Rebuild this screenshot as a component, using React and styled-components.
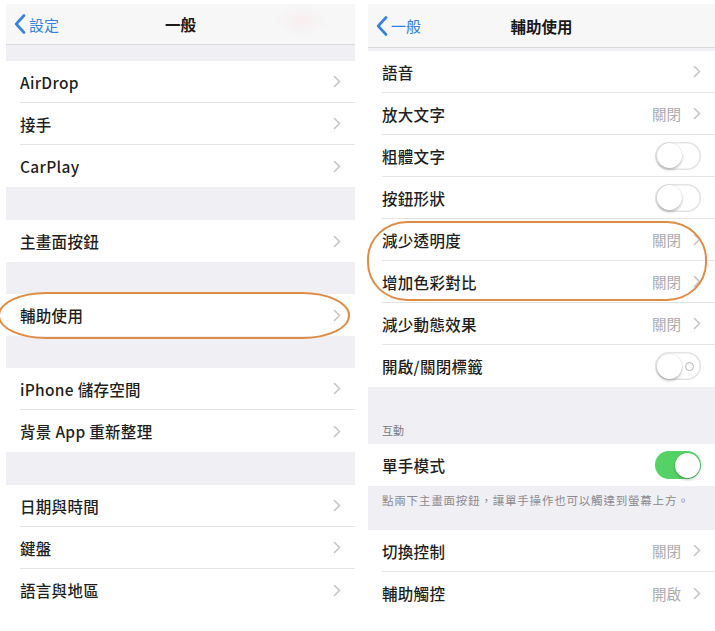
import React from 'react';
import styled, { createGlobalStyle } from 'styled-components';

const Global = createGlobalStyle`
  html, body { margin: 0; padding: 0; background: #ffffff; }
  body { font-family: "Noto Sans CJK TC", "Noto Sans", sans-serif; }
  * { box-sizing: border-box; }
`;

const Page = styled.div`
  display: flex;
  align-items: flex-start;
  gap: 13px;
  padding: 4px 0 0 6px;
  width: 715px;
  height: 631px;
  overflow: hidden;
`;

const Phone = styled.div`
  position: relative;
  width: ${p => p.$w}px;
  flex: none;
  background: #efeff4;
  display: flex;
  flex-direction: column;
`;

const Nav = styled.div`
  height: ${p => p.$h}px;
  background: #f7f7f8;
  border-bottom: 1px solid #d9d9dd;
  display: grid;
  grid-template-columns: 1fr auto 1fr;
  align-items: center;
  padding: 0 8px;
`;

const Back = styled.div`
  display: flex;
  align-items: center;
  gap: 3px;
  color: #3580e0;
  font-size: 15px;
  justify-self: start;
`;

const Title = styled.div`
  font-size: 15.5px;
  font-weight: 700;
  color: #1a1a1a;
`;

const Gap = styled.div`
  height: ${p => p.$h}px;
`;

const GroupHeader = styled.div`
  height: ${p => p.$h}px;
  display: flex;
  align-items: flex-end;
  padding: 0 14px 6px;
  font-size: 11px;
  color: #7a7a7f;
`;

const Row = styled.div`
  height: 42px;
  background: #ffffff;
  padding-left: 14px;
  display: flex;
`;

const RowInner = styled.div`
  flex: 1;
  display: flex;
  align-items: center;
  padding-right: 14px;
  border-bottom: ${p => (p.$last ? 'none' : '1px solid #e4e4e7')};
`;

const Label = styled.div`
  flex: 1;
  font-size: 15.5px;
  font-weight: 500;
  color: #1f1f21;
  letter-spacing: 0.3px;
`;

const Value = styled.div`
  font-size: 14.5px;
  color: #ababaf;
  margin-right: 12px;
`;

const Footer = styled.div`
  height: 44px;
  padding: 6px 14px 0;
  font-size: 11.5px;
  color: #8b8b90;
  letter-spacing: 0.8px;
  white-space: nowrap;
`;

const Track = styled.div`
  width: 46px;
  height: 28px;
  border-radius: 14px;
  padding: 1.5px;
  display: flex;
  align-items: center;
  justify-content: ${p => (p.$on ? 'flex-end' : 'space-between')};
  background: ${p => (p.$on ? '#55d266' : '#ffffff')};
  box-shadow: ${p => (p.$on ? 'none' : 'inset 0 0 0 1.5px #e3e3e6')};
`;

const Knob = styled.div`
  width: 25px;
  height: 25px;
  border-radius: 50%;
  background: #ffffff;
  box-shadow: 0 2px 3px rgba(0, 0, 0, 0.22), 0 0 0 0.5px rgba(0, 0, 0, 0.08);
`;

const Ring = styled.div`
  width: 9px;
  height: 9px;
  border-radius: 50%;
  border: 1.3px solid #b3b3b7;
  margin-right: 6px;
`;

const Mark = styled.div`
  position: absolute;
  left: ${p => p.$l}px;
  top: ${p => p.$t}px;
  width: ${p => p.$w}px;
  height: ${p => p.$h}px;
  border: 2px solid #df8d46;
  border-radius: ${p => p.$r};
  pointer-events: none;
`;

const Smudge = styled.div`
  position: absolute;
  left: 268px;
  top: 1px;
  width: 56px;
  height: 32px;
  background: radial-gradient(ellipse at center, rgba(250, 205, 205, 0.22), rgba(250, 215, 215, 0) 70%);
`;

const BackChevron = () => (
  <svg width="12" height="20" viewBox="0 0 12 20">
    <path d="M10 1.5 L2.2 10 L10 18.5" fill="none" stroke="#3580e0" strokeWidth="2.6" strokeLinecap="round" strokeLinejoin="round" />
  </svg>
);

const Chevron = () => (
  <svg width="8" height="13" viewBox="0 0 8 13">
    <path d="M1.5 1.5 L6.5 6.5 L1.5 11.5" fill="none" stroke="#c5c5c9" strokeWidth="1.6" strokeLinecap="round" strokeLinejoin="round" />
  </svg>
);

const Toggle = ({ on, ring }) => (
  <Track $on={on}>
    <Knob />
    {ring && <Ring />}
  </Track>
);

const Item = ({ label, value, kind = 'chevron', last, ring }) => (
  <Row>
    <RowInner $last={last}>
      <Label>{label}</Label>
      {value && <Value>{value}</Value>}
      {kind === 'chevron' && <Chevron />}
      {kind === 'off' && <Toggle on={false} ring={ring} />}
      {kind === 'on' && <Toggle on />}
    </RowInner>
  </Row>
);

export default function App() {
  return (
    <>
      <Global />
      <Page>
        <Phone $w={349}>
          <Nav $h={41}>
            <Back><BackChevron />設定</Back>
            <Title>一般</Title>
            <div />
          </Nav>
          <Smudge />
          <Gap $h={16} />
          <Item label="AirDrop" />
          <Item label="接手" />
          <Item label="CarPlay" last />
          <Gap $h={33} />
          <Item label="主畫面按鈕" last />
          <Gap $h={32} />
          <Item label="輔助使用" last />
          <Gap $h={32} />
          <Item label="iPhone 儲存空間" />
          <Item label="背景 App 重新整理" last />
          <Gap $h={33} />
          <Item label="日期與時間" />
          <Item label="鍵盤" />
          <Item label="語言與地區" last />
          <Mark $l={-8} $t={288} $w={352} $h={47} $r="48px / 23px" />
        </Phone>
        <Phone $w={347}>
          <Nav $h={44}>
            <Back><BackChevron />一般</Back>
            <Title>輔助使用</Title>
            <div />
          </Nav>
          <Gap $h={3} />
          <Item label="語音" />
          <Item label="放大文字" value="關閉" />
          <Item label="粗體文字" kind="off" />
          <Item label="按鈕形狀" kind="off" />
          <Item label="減少透明度" value="關閉" />
          <Item label="增加色彩對比" value="關閉" />
          <Item label="減少動態效果" value="關閉" />
          <Item label="開啟/關閉標籤" kind="off" ring last />
          <GroupHeader $h={57}>互動</GroupHeader>
          <Item label="單手模式" kind="on" last />
          <Footer>點兩下主畫面按鈕，讓單手操作也可以觸達到螢幕上方。</Footer>
          <Item label="切換控制" value="關閉" />
          <Item label="輔助觸控" value="開啟" last />
          <Mark $l={-1} $t={217} $w={340} $h={80} $r="40px / 38px" />
        </Phone>
      </Page>
    </>
  );
}
